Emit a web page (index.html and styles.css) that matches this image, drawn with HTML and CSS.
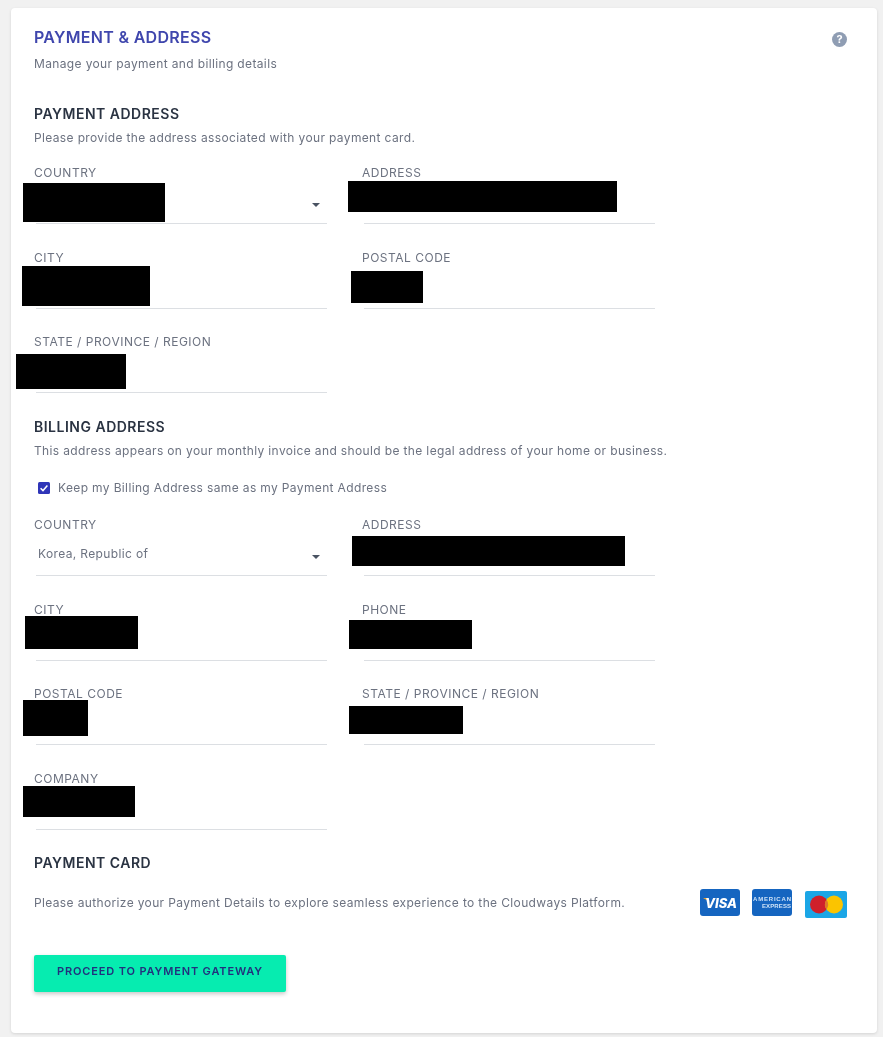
FILE: index.html
```html
<!DOCTYPE html>
<html lang="en">
<head>
<meta charset="utf-8">
<title>Payment &amp; Address</title>
<link rel="stylesheet" href="styles.css">
</head>
<body>
<main class="card">
  <header class="page-head">
    <div>
      <h1 class="page-title">PAYMENT &amp; ADDRESS</h1>
      <p class="text page-sub">Manage your payment and billing details</p>
    </div>
    <span class="help">?</span>
  </header>

  <section class="payment-section">
    <h2 class="heading">PAYMENT ADDRESS</h2>
    <p class="text heading-sub">Please provide the address associated with your payment card.</p>
    <div class="fields">
      <div class="field"><label class="label">COUNTRY</label><div class="input select"><svg class="caret" viewBox="0 0 10 5"><path d="M0 0h10L5 5z"/></svg></div><i class="redact p1"></i></div>
      <div class="field"><label class="label">ADDRESS</label><div class="input"></div><i class="redact p2"></i></div>
      <div class="field"><label class="label">CITY</label><div class="input"></div><i class="redact p3"></i></div>
      <div class="field"><label class="label">POSTAL CODE</label><div class="input"></div><i class="redact p4"></i></div>
      <div class="field"><label class="label">STATE / PROVINCE / REGION</label><div class="input"></div><i class="redact p5"></i></div>
    </div>
  </section>

  <section class="billing-section">
    <h2 class="heading">BILLING ADDRESS</h2>
    <p class="text heading-sub">This address appears on your monthly invoice and should be the legal address of your home or business.</p>
    <div class="check-row">
      <svg class="check" viewBox="0 0 12 12"><rect width="12" height="12" rx="1.5" fill="#2f35b8"/><path d="M2.6 6.2l2.4 2.4 4.4-5" fill="none" stroke="#fff" stroke-width="1.5"/></svg>
      <span class="text">Keep my Billing Address same as my Payment Address</span>
    </div>
    <div class="fields">
      <div class="field"><label class="label">COUNTRY</label><div class="input select"><span class="value">Korea, Republic of</span><svg class="caret" viewBox="0 0 10 5"><path d="M0 0h10L5 5z"/></svg></div></div>
      <div class="field"><label class="label">ADDRESS</label><div class="input"></div><i class="redact b1"></i></div>
      <div class="field"><label class="label">CITY</label><div class="input"></div><i class="redact b2"></i></div>
      <div class="field"><label class="label">PHONE</label><div class="input"></div><i class="redact b3"></i></div>
      <div class="field"><label class="label">POSTAL CODE</label><div class="input"></div><i class="redact b4"></i></div>
      <div class="field"><label class="label">STATE / PROVINCE / REGION</label><div class="input"></div><i class="redact b5"></i></div>
      <div class="field"><label class="label">COMPANY</label><div class="input"></div><i class="redact b6"></i></div>
    </div>
  </section>

  <section class="card-section">
    <h2 class="heading">PAYMENT CARD</h2>
    <div class="card-row">
      <p class="text">Please authorize your Payment Details to explore seamless experience to the Cloudways Platform.</p>
      <div class="brands">
        <svg class="brand" viewBox="0 0 40 27"><rect width="40" height="27" rx="3" fill="#1565c0"/><path d="M3 9h5l1.500 3.500z" fill="#f9a825"/><text class="visa" x="21" y="18.500" text-anchor="middle">VISA</text></svg>
        <svg class="brand" viewBox="0 0 40 27"><rect width="40" height="27" rx="3" fill="#1565c0"/><text class="amex" x="1" y="12" textLength="38">AMERICAN</text><text class="amex" x="10" y="19" textLength="29">EXPRESS</text></svg>
        <svg class="brand brand-mc" viewBox="0 0 42 27"><rect width="42" height="27" rx="2" fill="#1ba6e6"/><circle cx="14" cy="13.500" r="9" fill="#cf202b"/><circle cx="29" cy="13.500" r="9" fill="#fbc400"/><path d="M21.500 8.500a9 9 0 0 1 0 10a9 9 0 0 1 0-10z" fill="#dd7a2a"/></svg>
      </div>
    </div>
    <button class="cta" type="button"><span class="cta-text">PROCEED TO PAYMENT GATEWAY</span></button>
  </section>
</main>
</body>
</html>
```
FILE: styles.css
```css
* { box-sizing: border-box; }
html, body { height: 100%; }
body {
  margin: 0;
  padding: 8px 6px 4px 11px;
  background: #f1f1f1;
  font-family: Inter, "Noto Sans", "Liberation Sans", sans-serif;
  overflow: hidden;
}
.card {
  height: 1025px;
  background: #fff;
  border-radius: 4px;
  box-shadow: 0 1px 3px rgba(0,0,0,.12);
  padding: 20px 30px 0 23px;
}
.page-head { display: flex; justify-content: space-between; align-items: flex-start; }
.page-title, .heading, .text, .label, .value, .cta-text, .help { filter: blur(.35px); }
.page-title {
  margin: 0;
  font-size: 16px;
  line-height: 18px;
  font-weight: 600;
  letter-spacing: .3px;
  color: #3f46ad;
}
.text, .value {
  margin: 0;
  font-size: 12px;
  line-height: 16px;
  letter-spacing: .36px;
  color: #6c7280;
}
.page-sub { margin-top: 10px; }
.help {
  width: 15px;
  height: 15px;
  margin-top: 4px;
  border-radius: 50%;
  background: #8f9db3;
  color: #fff;
  font-size: 11px;
  font-weight: 700;
  line-height: 15px;
  text-align: center;
}
.payment-section { margin-top: 34px; }
.heading {
  margin: 0;
  font-size: 14px;
  line-height: 16px;
  font-weight: 600;
  letter-spacing: .5px;
  color: #2a3342;
}
.heading-sub { margin-top: 8px; }
.fields {
  display: grid;
  grid-template-columns: 293px 293px;
  column-gap: 35px;
  row-gap: 24.5px;
  margin-top: 18px;
}
.field { position: relative; height: 60px; }
.label {
  display: block;
  font-size: 12px;
  line-height: 17px;
  letter-spacing: .5px;
  color: #6c7280;
}
.input {
  height: 43px;
  margin-left: 2px;
  border-bottom: 1px solid #dcdfe3;
  display: flex;
  align-items: center;
  justify-content: space-between;
  padding: 0 7px 0 2px;
}
.caret { width: 8px; height: 4px; margin-top: 5px; margin-left: auto; fill: #4a5362; }
.redact { position: absolute; background: #000; }
.p1 { left: -11px; top: 19px; width: 142px; height: 39px; }
.p2 { left: -14px; top: 17px; width: 269px; height: 31px; }
.p3 { left: -12px; top: 17px; width: 128px; height: 40px; }
.p4 { left: -11px; top: 22px; width: 72px; height: 32px; }
.p5 { left: -18px; top: 21px; width: 110px; height: 35px; }
.billing-section { margin-top: 26px; }
.check-row { display: flex; align-items: center; gap: 8px; margin: 21px 0 20px 4px; }
.check { width: 12px; height: 12px; flex: none; }
.b1 { left: -10px; top: 20px; width: 273px; height: 30px; }
.b2 { left: -9px; top: 15px; width: 113px; height: 33px; }
.b3 { left: -13px; top: 19px; width: 123px; height: 29px; }
.b4 { left: -11px; top: 15px; width: 65px; height: 36px; }
.b5 { left: -13px; top: 21px; width: 114px; height: 28px; }
.b6 { left: -11px; top: 16px; width: 112px; height: 31px; }
.card-section { margin-top: 25px; }
.card-row {
  display: flex;
  align-items: center;
  justify-content: space-between;
  margin-top: 18px;
}
.brands { display: flex; align-items: flex-start; gap: 12px; filter: blur(.4px); }
.brand { width: 40px; height: 27px; display: block; }
.brand-mc { width: 42px; margin: 2px 0 0 1px; }
.visa { font: italic 800 13px Inter, "Liberation Sans", sans-serif; fill: #fff; }
.amex { font: 700 6px "Liberation Sans", sans-serif; fill: #cfe3f7; }
.cta {
  display: block;
  width: 252px;
  height: 37px;
  margin-top: 37px;
  padding: 0 0 4px;
  border: 0;
  border-radius: 2px;
  background: #06ecb0;
  box-shadow: 0 2px 4px rgba(0,0,0,.22);
  color: #22307d;
  font-family: inherit;
  font-size: 11px;
  font-weight: 600;
  letter-spacing: .85px;
}
.cta-text { display: inline-block; }
```
